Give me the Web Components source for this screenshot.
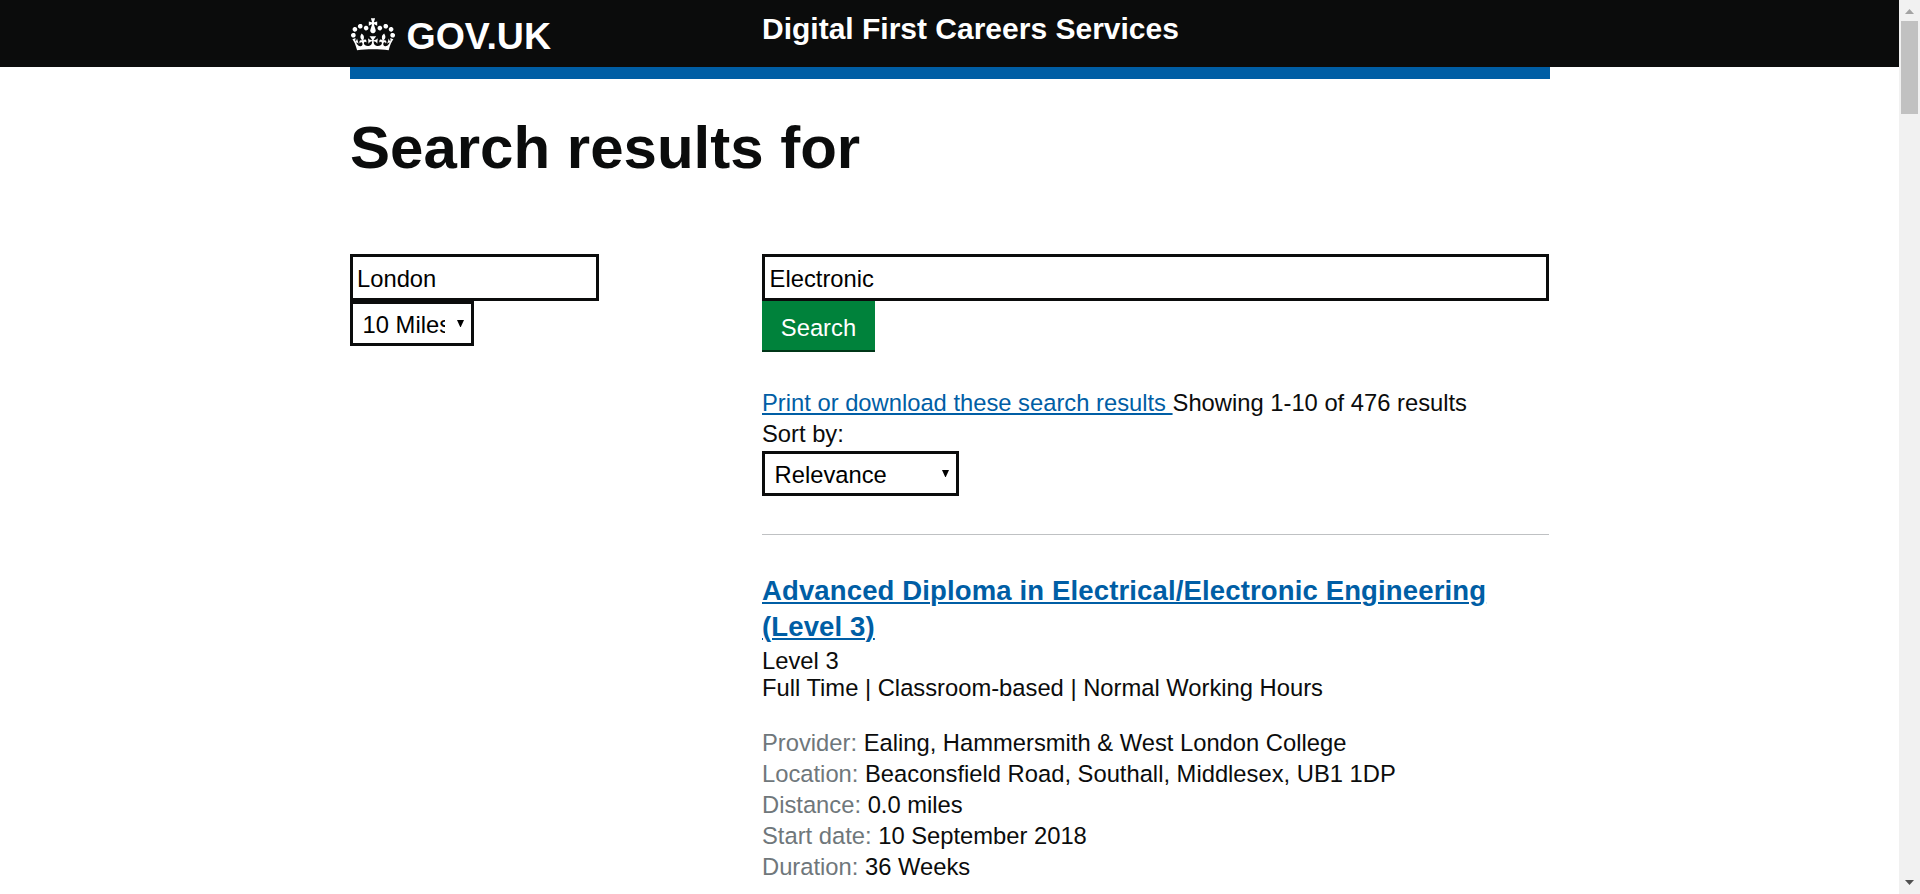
<!DOCTYPE html>
<html lang="en">
<head>
<meta charset="utf-8">
<title>Digital First Careers Services</title>
<style>
html,body{margin:0;height:100%;overflow:hidden;background:#fff}
body{font-family:"Liberation Sans",Arial,sans-serif;font-size:23.75px;line-height:31px;color:#0b0c0c}
</style>
</head>
<body>
<careers-page></careers-page>
<script>
const define = (name, html) => customElements.define(name, class extends HTMLElement {
  constructor() {
    super();
    const t = document.createElement('template');
    t.innerHTML = html;
    this.attachShadow({mode: 'open'}).append(t.content.cloneNode(true));
  }
});

define('gov-header', `
<style>
:host{display:block;background:#0b0c0c;height:67px;color:#fff;font-weight:bold}
.bar{width:1200px;height:67px;margin-left:350px;display:grid;grid-template-columns:412px 1fr;align-items:start;border-bottom:12px solid #005ea5}
.logo{display:flex;align-items:flex-start;gap:12px;padding-top:18px;font-size:37.5px;line-height:37.5px}
svg{width:44px;height:33px;display:block;margin-left:.5px}
.service{padding-top:10px;font-size:30px;line-height:37.5px}
</style>
<div class="bar">
<div class="logo"><svg viewBox="0 0 132 97" fill="#fff"><path fill-rule="evenodd" d="M25 30.2c3.5 1.5 7.7-.2 9.1-3.7 1.5-3.6-.2-7.8-3.9-9.2-3.6-1.4-7.6.3-9.1 3.9-1.4 3.5.3 7.5 3.9 9zM9 39.5c3.6 1.5 7.8-.2 9.2-3.7 1.5-3.6-.2-7.8-3.9-9.1-3.6-1.5-7.6.2-9.1 3.8-1.4 3.5.3 7.5 3.8 9zM4.4 57.2c3.5 1.5 7.7-.2 9.1-3.8 1.5-3.6-.2-7.7-3.9-9.1-3.5-1.5-7.6.3-9.1 3.8-1.4 3.5.3 7.6 3.9 9.1zm38.3-21.4c3.5 1.5 7.7-.2 9.1-3.8 1.5-3.6-.2-7.7-3.9-9.1-3.6-1.5-7.6.3-9.1 3.8-1.3 3.6.4 7.7 3.9 9.1zm64.4-5.6c-3.6 1.5-7.8-.2-9.1-3.7-1.5-3.6.2-7.8 3.8-9.2 3.6-1.4 7.7.3 9.2 3.9 1.3 3.5-.4 7.5-3.9 9zm15.9 9.3c-3.6 1.5-7.7-.2-9.1-3.7-1.5-3.6.2-7.8 3.7-9.1 3.6-1.5 7.7.2 9.2 3.8 1.5 3.5-.3 7.5-3.8 9zm4.7 17.7c-3.6 1.5-7.8-.2-9.2-3.8-1.5-3.6.2-7.7 3.9-9.1 3.6-1.5 7.7.3 9.2 3.8 1.3 3.5-.4 7.6-3.9 9.1zM89.3 35.8c-3.6 1.5-7.8-.2-9.2-3.8-1.4-3.6.2-7.7 3.9-9.1 3.6-1.5 7.7.3 9.2 3.8 1.4 3.6-.3 7.7-3.9 9.1zM69.7 17.7l8.9 4.7V9.3l-8.9 2.8c-.2-.3-.5-.6-.9-.9L72.4 0H59.6l3.5 11.2c-.3.3-.6.5-.9.9l-8.8-2.8v13.1l8.8-4.7c.3.3.6.7.9.9l-5 15.4v.1c-.2.8-.4 1.6-.4 2.4 0 4.1 3.1 7.5 7 8.1h.2c.3 0 .7.1 1 .1.4 0 .7 0 1-.1h.2c4-.6 7.1-4.1 7.1-8.1 0-.8-.1-1.7-.4-2.4V34l-5.1-15.4c.4-.2.7-.6 1-.9zM66 92.8c16.9 0 32.8 1.1 47.1 3.2 4-16.9 8.9-26.7 14-33.5l-9.6-3.4c1 4.9 1.1 7.2 0 10.2-1.5-1.4-3-4.3-4.2-8.7L108.6 76c2.8-2 5-3.2 7.5-3.3-4.4 9.4-10 11.9-13.6 11.2-4.3-.8-6.3-4.6-5.6-7.9 1-4.7 5.7-5.9 8-.5 4.3-8.7-3-11.4-7.6-8.8 7.1-7.2 7.9-13.5 2.1-21.1-8 6.1-8.1 12.3-4.5 20.8-4.7-5.4-12.1-2.5-9.5 6.2 3.4-5.2 7.9-2 7.2 3.1-.6 4.3-6.4 7.8-13.5 7.2-10.3-.9-10.9-8-11.2-13.8 2.5-.5 7.1 1.8 11 7.3L80.2 60c-4.1 4.4-8 5.3-12.3 5.4 1.4-4.4 8-11.6 8-11.6H55.5s6.4 7.2 7.9 11.6c-4.2-.1-8-1-12.3-5.4l1.4 16.4c3.9-5.5 8.5-7.7 10.9-7.3-.3 5.8-.9 12.8-11.1 13.8-7.2.6-12.9-2.9-13.5-7.2-.7-5 3.8-8.3 7.1-3.1 2.7-8.7-4.6-11.6-9.4-6.2 3.7-8.5 3.6-14.7-4.6-20.8-5.8 7.6-5 13.9 2.2 21.1-4.7-2.6-11.9.1-7.7 8.8 2.3-5.5 7.1-4.2 8.1.5.7 3.3-1.3 7.1-5.7 7.9-3.5.7-9-1.8-13.5-11.2 2.5.1 4.7 1.3 7.5 3.3l-4.7-15.4c-1.2 4.4-2.7 7.2-4.3 8.7-1.1-3-.9-5.3 0-10.2l-9.5 3.4c5 6.9 9.9 16.7 14 33.5 14.8-2.1 30.8-3.2 47.7-3.2z"/></svg><span>GOV.UK</span></div>
<div class="service">Digital First Careers Services</div>
</div>`);

define('text-box', `
<style>
:host{display:block;box-sizing:border-box;height:47px;border:3px solid #0b0c0c;padding:6px 4px 0 var(--pad,4px);color:#000;white-space:nowrap}
</style><slot></slot>`);

define('select-box', `
<style>
:host{display:flex;box-sizing:border-box;height:45px;border:3px solid #0b0c0c;padding:5px 7px 0 9.6px;color:#000;justify-content:space-between}
span{overflow:hidden;white-space:nowrap;max-width:var(--clip,none)}
svg{width:7px;height:7px;margin-top:11px;flex:none}
</style><span><slot></slot></span><svg viewBox="0 0 7 7"><path d="M0 0h7L3.8 7h-.6z"/></svg>`);

define('search-button', `
<style>
:host{display:block;box-sizing:border-box;width:113px;height:50.5px;padding-top:11px;background:#00823b;border-bottom:2.5px solid #003618;color:#fff;text-align:center}
</style><slot></slot>`);

define('course-detail', `
<style>:host{display:block;height:31px;white-space:nowrap}span{color:#6f777b}</style>
<span><slot name="label"></slot></span> <slot></slot>`);

define('course-result', `
<style>
:host{display:block;margin-top:38px;border-top:1px solid #bfc1c3;padding-top:38px}
h2{margin:0 0 2px;font-size:27.5px;line-height:36px;letter-spacing:.14px;color:#005ea5;text-decoration:underline;text-decoration-thickness:2px;text-underline-offset:2px}
.mode{line-height:27px}
.details{margin-top:26px}
</style>
<h2><slot name="title"></slot></h2>
<div class="mode"><slot name="level"></slot></div>
<div class="mode"><slot name="mode"></slot></div>
<div class="details"><slot></slot></div>`);

define('scroll-rail', `
<style>
:host{display:flex;flex-direction:column;align-items:center;background:#f1f1f1;width:21px;height:894px}
svg{width:9px;height:5px;flex:none}
.up{margin:9px 0 7px}
i{width:17px;height:93px;background:#c1c1c1}
.down{margin:auto 0 9px}
</style>
<svg class="up" viewBox="0 0 9 5"><path fill="#a3a3a3" d="M0 5 4.5 0 9 5z"/></svg><i></i>
<svg class="down" viewBox="0 0 9 5"><path fill="#505050" d="M0 0h9L4.5 5z"/></svg>`);

define('careers-page', `
<style>
:host{display:grid;grid-template-columns:1fr 21px;height:894px;overflow:hidden}
main{width:1200px;margin-left:350px}
h1{margin:0;padding-top:50px;font-size:60px;line-height:62px;height:137px}
.cols{display:grid;grid-template-columns:412px 787px}
.place{width:249px}
.dist{width:124px;--clip:82px}
.query{--pad:4.6px}
.meta{margin-top:35.5px}
.sort{width:197px;margin-top:2px}
a{color:#005ea5;text-decoration:underline;text-decoration-thickness:2px;text-underline-offset:2px;white-space:pre}
p{margin:0}
</style>
<div>
<gov-header></gov-header>
<main>
<h1>Search results for</h1>
<div class="cols">
<section><text-box class="place">London</text-box><select-box class="dist">10 Miles</select-box></section>
<section>
<text-box class="query">Electronic</text-box><search-button>Search</search-button>
<p class="meta"><a>Print or download these search results </a>Showing 1-10 of 476 results</p>
<p>Sort by:</p>
<select-box class="sort">Relevance</select-box>
<course-result>
<span slot="title">Advanced Diploma in Electrical/Electronic Engineering (Level 3)</span>
<span slot="level">Level 3</span>
<span slot="mode">Full Time | Classroom-based | Normal Working Hours</span>
<course-detail><span slot="label">Provider:</span>Ealing, Hammersmith &amp; West London College</course-detail>
<course-detail><span slot="label">Location:</span>Beaconsfield Road, Southall, Middlesex, UB1 1DP</course-detail>
<course-detail><span slot="label">Distance:</span>0.0 miles</course-detail>
<course-detail><span slot="label">Start date:</span>10 September 2018</course-detail>
<course-detail><span slot="label">Duration:</span>36 Weeks</course-detail>
</course-result>
</section>
</div>
</main>
</div>
<scroll-rail></scroll-rail>`);
</script>
</body>
</html>
